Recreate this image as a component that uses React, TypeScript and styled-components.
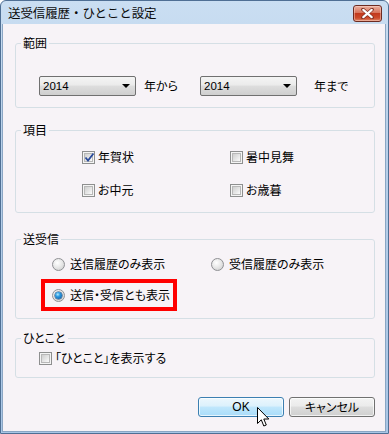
import React from "react";
import styled, { createGlobalStyle } from "styled-components";

const Global = createGlobalStyle`
  html, body { margin: 0; padding: 0; background: #ffffff; }
  body { font-family: "Noto Sans CJK JP", "Noto Sans", sans-serif; font-size: 12px; color: #000; }
`;

const Window = styled.div`
  position: relative;
  box-sizing: border-box;
  width: 389px;
  height: 434px;
  border: 1px solid #4f6f94;
  border-radius: 6px 6px 0 0;
  background: linear-gradient(180deg, #cadef2 0%, #b9d1ea 30%, #a9c6e6 100%);
  display: flex;
  flex-direction: column;
  padding: 0 2px 1px 1px;
  overflow: hidden;
`;

const TitleBar = styled.div`
  height: 23px;
  display: flex;
  align-items: center;
  padding: 0 4px 0 6px;
  flex: none;
`;

const Title = styled.div`
  font-size: 12.5px;
  line-height: 16px;
  color: #0b0b0b;
  letter-spacing: -0.1px;
`;

const CloseButton = styled.div`
  margin-left: auto;
  margin-top: 1px;
  box-sizing: border-box;
  width: 29px;
  height: 17px;
  border: 1px solid #6c2b22;
  border-radius: 3px;
  background: linear-gradient(180deg, #eab0a0 0%, #d8745c 45%, #c2391d 50%, #cc4b2c 80%, #e08a6b 100%);
  display: flex;
  align-items: center;
  justify-content: center;
  box-shadow: inset 0 0 0 1px rgba(255, 220, 210, 0.45);
`;

const Client = styled.div`
  flex: 1;
  background: #f7f3f7;
  border: 1px solid #8ba6c4;
  border-top: none;
  display: flex;
  flex-direction: column;
  padding: 12px 10px 0 12px;
  font-feature-settings: "palt";
`;

const Group = styled.fieldset<{ $top: number }>`
  margin: ${(p) => p.$top}px 0 0 0;
  padding: 0;
  border: 1px solid #d5dfe5;
  border-radius: 3px;
  min-width: 0;
`;

const Legend = styled.legend`
  margin-left: 5px;
  padding: 0 2px;
  font-size: 12px;
  line-height: 14px;
`;

const RangeBody = styled.div`
  height: 57px;
  box-sizing: border-box;
  padding: 15px 0 0 23px;
  display: flex;
  align-items: center;
  align-self: flex-start;
`;

const RangeRow = styled.div`
  display: grid;
  grid-template-columns: 97px 64px 97px 17px auto;
  align-items: center;
  height: 20px;
`;

const Combo = styled.div`
  box-sizing: border-box;
  width: 97px;
  height: 20px;
  border: 1px solid #707070;
  border-radius: 2px;
  background: linear-gradient(180deg, #f4f4f4 0%, #ebebeb 45%, #dddddd 50%, #cfcfcf 100%);
  display: flex;
  align-items: center;
  padding: 0 5px 0 3px;
  font-family: "Liberation Sans", Arial, sans-serif;
  font-size: 11.5px;
`;

const ComboArrow = styled.span`
  margin-left: auto;
  width: 0;
  height: 0;
  border-left: 4px solid transparent;
  border-right: 4px solid transparent;
  border-top: 4px solid #000;
`;

const Unit = styled.span<{ $pad?: number }>`
  padding-left: ${(p) => p.$pad ?? 0}px;
  font-size: 12px;
  line-height: 16px;
`;

const GridBody = styled.div<{ $h: number; $pt: number; $pl: number; $col: number; $gap: number }>`
  box-sizing: border-box;
  height: ${(p) => p.$h}px;
  padding: ${(p) => p.$pt}px 0 0 ${(p) => p.$pl}px;
  display: grid;
  grid-template-columns: ${(p) => p.$col}px auto;
  grid-auto-rows: 16px;
  row-gap: ${(p) => p.$gap}px;
  align-content: start;
`;

const Item = styled.label`
  display: flex;
  align-items: center;
  height: 16px;
  font-size: 12px;
  line-height: 16px;
  white-space: nowrap;
`;

const Box = styled.span`
  box-sizing: border-box;
  width: 13px;
  height: 13px;
  border: 1px solid #8e8f8f;
  background: #f4f4f4;
  margin-right: 3px;
  display: flex;
  align-items: center;
  justify-content: center;
  position: relative;
  flex: none;
`;

const BoxInner = styled.span`
  width: 9px;
  height: 9px;
  box-sizing: border-box;
  border: 1px solid #b8b8b8;
  background: linear-gradient(135deg, #cfcfcf 0%, #e6e6e6 55%, #fbfbfb 100%);
`;

const CheckMark = styled.svg`
  position: absolute;
  left: 0;
  top: -1px;
`;

const Radio = styled.span`
  box-sizing: border-box;
  width: 13px;
  height: 13px;
  border-radius: 50%;
  border: 1px solid #8f9094;
  background: radial-gradient(circle at 40% 35%, #ffffff 0%, #e9e9e9 45%, #c9c9c9 100%);
  margin-right: 5px;
  display: flex;
  align-items: center;
  justify-content: center;
  flex: none;
`;

const RadioDot = styled.span`
  width: 7px;
  height: 7px;
  border-radius: 50%;
  background: radial-gradient(circle at 40% 35%, #b6ecff 0%, #2d9be2 35%, #0b4c93 100%);
  box-shadow: 0 0 0 0.5px #1c3f6e;
`;

const RadioBody = styled.div`
  box-sizing: border-box;
  height: 72px;
  padding: 10px 0 0 36px;
  display: flex;
  flex-direction: column;
`;

const RadioRow = styled.div`
  display: grid;
  grid-template-columns: 159px auto;
  height: 16px;
`;

const Highlight = styled.div`
  box-sizing: border-box;
  width: 136px;
  height: 32px;
  margin: 7px 0 0 -11px;
  border: 4px solid #ff0000;
  padding-left: 7px;
  display: flex;
  align-items: center;
`;

const NoteBody = styled.div`
  box-sizing: border-box;
  height: 32px;
  padding: 5px 0 0 23px;
  display: flex;
`;

const ButtonRow = styled.div`
  margin-top: 19px;
  display: flex;
  justify-content: flex-end;
  gap: 5px;
`;

const Button = styled.div<{ $hot?: boolean }>`
  box-sizing: border-box;
  width: 86px;
  height: 20px;
  border-radius: 3px;
  border: 1px solid ${(p) => (p.$hot ? "#3c7fb1" : "#707070")};
  background: ${(p) =>
    p.$hot
      ? "linear-gradient(180deg, #ecf7fd 0%, #dcf1fc 45%, #c0e7fc 50%, #a9dcf9 100%)"
      : "linear-gradient(180deg, #f3f3f3 0%, #ebebeb 45%, #dddddd 50%, #cfcfcf 100%)"};
  box-shadow: inset 0 0 0 1px rgba(255, 255, 255, 0.7);
  display: flex;
  align-items: center;
  justify-content: center;
  font-size: 12px;
  line-height: 16px;
`;

const OkText = styled.span`
  font-family: "Liberation Sans", Arial, sans-serif;
  font-size: 12px;
`;

const Cursor = styled.svg`
  position: absolute;
  left: 256px;
  top: 406px;
`;

function Check({ checked }: { checked?: boolean }) {
  return (
    <Box>
      <BoxInner />
      {checked && (
        <CheckMark width="13" height="13" viewBox="0 0 13 13">
          <path d="M2.5 6.5 L5 9.5 L10.5 2.5" fill="none" stroke="#2a4a9a" strokeWidth="1.8" />
        </CheckMark>
      )}
    </Box>
  );
}

export default function App() {
  return (
    <>
      <Global />
      <Window>
        <TitleBar>
          <Title>送受信履歴・ひとこと設定</Title>
          <CloseButton>
            <svg width="13" height="11" viewBox="0 0 13 11">
              <path d="M2 1.5 L11 9.5 M11 1.5 L2 9.5" stroke="#7a2a1e" strokeWidth="3.6" strokeLinecap="round" />
              <path d="M2.3 1.8 L10.7 9.2 M10.7 1.8 L2.3 9.2" stroke="#ffffff" strokeWidth="2.2" strokeLinecap="round" />
            </svg>
          </CloseButton>
        </TitleBar>
        <Client>
          <Group $top={0}>
            <Legend>範囲</Legend>
            <RangeBody>
              <RangeRow>
                <Combo>
                  2014
                  <ComboArrow />
                </Combo>
                <Unit $pad={8}>年から</Unit>
                <Combo>
                  2014
                  <ComboArrow />
                </Combo>
                <span />
                <Unit>年まで</Unit>
              </RangeRow>
            </RangeBody>
          </Group>

          <Group $top={15}>
            <Legend>項目</Legend>
            <GridBody $h={75} $pt={12} $pl={66} $col={148} $gap={17}>
              <Item>
                <Check checked />
                年賀状
              </Item>
              <Item>
                <Check />
                暑中見舞
              </Item>
              <Item>
                <Check />
                お中元
              </Item>
              <Item>
                <Check />
                お歳暮
              </Item>
            </GridBody>
          </Group>

          <Group $top={19}>
            <Legend>送受信</Legend>
            <RadioBody>
              <RadioRow>
                <Item>
                  <Radio />
                  送信履歴のみ表示
                </Item>
                <Item>
                  <Radio />
                  受信履歴のみ表示
                </Item>
              </RadioRow>
              <Highlight>
                <Item>
                  <Radio>
                    <RadioDot />
                  </Radio>
                  送信・受信とも表示
                </Item>
              </Highlight>
            </RadioBody>
          </Group>

          <Group $top={12}>
            <Legend>ひとこと</Legend>
            <NoteBody>
              <Item>
                <Check />
                「ひとこと」を表示する
              </Item>
            </NoteBody>
          </Group>

          <ButtonRow>
            <Button $hot>
              <OkText>OK</OkText>
            </Button>
            <Button>キャンセル</Button>
          </ButtonRow>
        </Client>
        <Cursor width="13" height="21" viewBox="0 0 13 21">
          <path
            d="M0.5 0.5 L0.5 16.5 L4.3 12.8 L6.8 19 L9.3 18 L6.8 12 L11.8 12 Z"
            fill="#ffffff"
            stroke="#000000"
            strokeWidth="1"
            strokeLinejoin="miter"
          />
        </Cursor>
      </Window>
    </>
  );
}
